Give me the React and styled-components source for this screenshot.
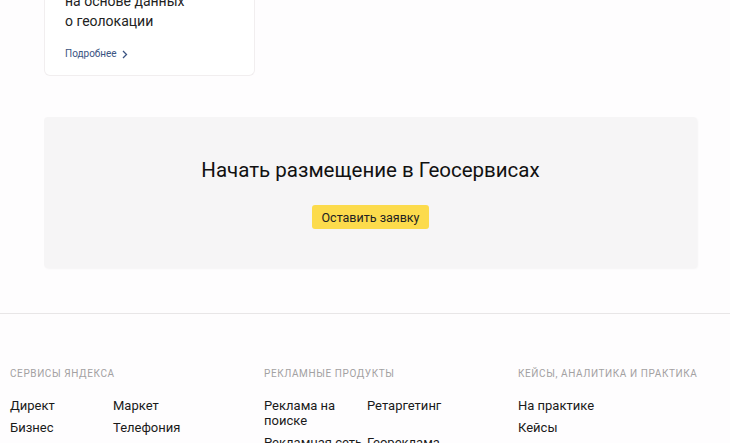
import React from 'react'
import styled, { createGlobalStyle } from 'styled-components'

const GlobalStyle = createGlobalStyle`
  html, body {
    margin: 0;
    padding: 0;
    background: #fefdfe;
    font-family: Roboto, "Noto Sans", Arial, sans-serif;
    color: #1a1a1a;
    overflow: hidden;
  }
`

const Page = styled.div`
  margin-top: -30px;
`

const Cards = styled.section`
  padding: 0 44px;
  display: flex;
`

const Card = styled.div`
  width: 211px;
  box-sizing: border-box;
  padding: 21px 20px 14px;
  background: #fff;
  border: 1px solid #f1eeef;
  border-top: none;
  border-radius: 0 0 6px 6px;
`

const CardText = styled.p`
  margin: 0;
  font-size: 14px;
  line-height: 20px;
  color: #222;
`

const MoreLink = styled.a`
  display: inline-flex;
  align-items: center;
  gap: 5px;
  margin-top: 16px;
  font-size: 10px;
  line-height: 14px;
  color: #3b5482;
  text-decoration: none;
`

const Promo = styled.section`
  margin: 41px 33px 0 44px;
  padding: 40px 0 39px;
  background: #f6f5f6;
  border-radius: 4px;
  box-shadow: 1px 1px 2px rgba(0, 0, 0, 0.04);
  display: flex;
  flex-direction: column;
  align-items: center;
`

const PromoTitle = styled.h2`
  margin: 0;
  font-size: 20.5px;
  line-height: 26px;
  font-weight: 400;
  color: #111;
`

const YellowButton = styled.button`
  margin-top: 22px;
  height: 24px;
  padding: 0 10px;
  border: none;
  border-radius: 3px;
  background: #fcdb4c;
  font-family: inherit;
  font-size: 12.5px;
  color: #222;
  cursor: pointer;
`

const Divider = styled.hr`
  margin: 45px 0 0;
  border: none;
  border-top: 1px solid #e8e6e7;
`

const Footer = styled.footer`
  padding: 54px 10px 0;
  display: grid;
  grid-template-columns: 254px 254px 1fr;
`

const Heading = styled.div`
  font-size: 10px;
  line-height: 12px;
  letter-spacing: 0.6px;
  text-transform: uppercase;
  color: #a3a1a2;
  white-space: nowrap;
`

const LinkGrid = styled.div`
  margin-top: 18px;
  display: grid;
  grid-template-columns: 103px 103px;
  row-gap: 7px;
  align-items: start;
`

const FooterLink = styled.a`
  width: 100px;
  font-size: 13px;
  line-height: 15px;
  color: #1a1a1a;
  text-decoration: none;
`

const Chevron = () => (
  <svg width="6" height="9" viewBox="0 0 6 9" fill="none">
    <path d="M1 1l3.5 3.5L1 8" stroke="#3b5482" strokeWidth="1.3" />
  </svg>
)

const columns = [
  {
    title: 'Сервисы Яндекса',
    links: ['Директ', 'Маркет', 'Бизнес', 'Телефония']
  },
  {
    title: 'Рекламные продукты',
    links: ['Реклама на поиске', 'Ретаргетинг', 'Рекламная сеть', 'Геореклама']
  },
  {
    title: 'Кейсы, аналитика и практика',
    links: ['На практике', '', 'Кейсы', '']
  }
]

export default function App() {
  return (
    <>
      <GlobalStyle />
      <Page>
        <Cards>
          <Card>
            <CardText>на основе данных</CardText>
            <CardText>о геолокации</CardText>
            <MoreLink href="#">
              Подробнее <Chevron />
            </MoreLink>
          </Card>
        </Cards>

        <Promo>
          <PromoTitle>Начать размещение в Геосервисах</PromoTitle>
          <YellowButton>Оставить заявку</YellowButton>
        </Promo>

        <Divider />

        <Footer>
          {columns.map((col) => (
            <div key={col.title}>
              <Heading>{col.title}</Heading>
              <LinkGrid>
                {col.links.map((l, i) => (
                  <FooterLink key={i} href="#">{l}</FooterLink>
                ))}
              </LinkGrid>
            </div>
          ))}
        </Footer>
      </Page>
    </>
  )
}
